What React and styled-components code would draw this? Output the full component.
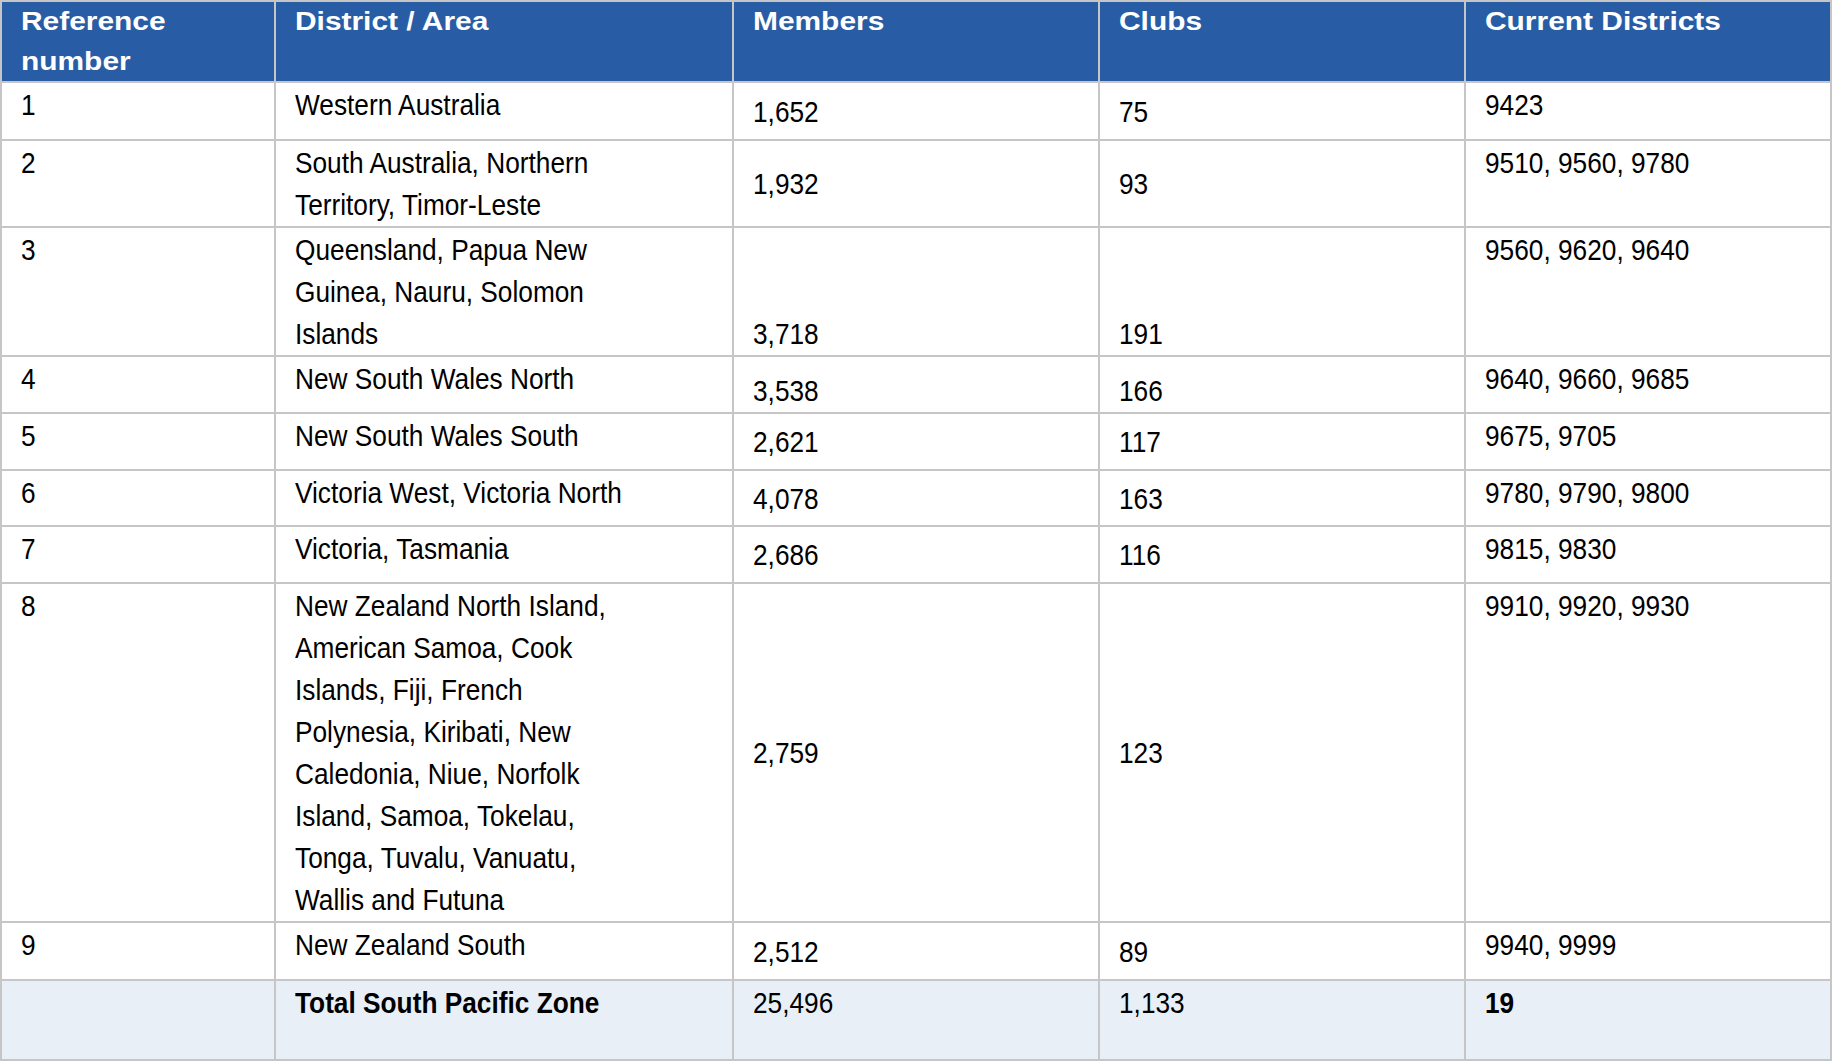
import React from 'react'
import styled, { createGlobalStyle } from 'styled-components'

const GlobalStyle = createGlobalStyle`
  body {
    margin: 0;
    background: #ffffff;
  }
`

const Table = styled.table`
  border-collapse: collapse;
  table-layout: fixed;
  width: 1832px;
  font-family: "Liberation Sans", Arial, sans-serif;
  color: #000;
`

const HeadCell = styled.th`
  background: #285da5;
  color: #fff;
  font-weight: 700;
  font-size: 26px;
  line-height: 40px;
  text-align: left;
  vertical-align: top;
  padding: 0 18px 0 19px;
  border: 2px solid #c6c6c6;
  height: 76px;
`

const Cell = styled.td`
  font-size: 29.5px;
  line-height: 42px;
  font-weight: ${(p) => (p.$bold ? 700 : 400)};
  vertical-align: ${(p) => p.$valign || 'top'};
  padding: 1px 18px 0 19px;
  border: 2px solid #c6c6c6;
`

const Row = styled.tr`
  height: ${(p) => p.$h}px;
  background: ${(p) => (p.$total ? '#e8eff7' : '#ffffff')};
`

// condensed look: the screenshot's fonts are narrower / wider than Arial
const Text = styled.span`
  display: block;
  white-space: nowrap;
  margin-top: ${(p) => p.$lift || 0}px;
  transform: scaleX(${(p) => p.$sx});
  transform-origin: 0 0;
`

const rows = [
  { ref: '1', area: ['Western Australia'], members: '1,652', clubs: '75', districts: '9423', align: 'middle', h: 58 },
  { ref: '2', area: ['South Australia, Northern', 'Territory, Timor-Leste'], members: '1,932', clubs: '93', districts: '9510, 9560, 9780', align: 'middle', h: 87 },
  { ref: '3', area: ['Queensland, Papua New', 'Guinea, Nauru, Solomon', 'Islands'], members: '3,718', clubs: '191', districts: '9560, 9620, 9640', align: 'bottom', h: 128 },
  { ref: '4', area: ['New South Wales North'], members: '3,538', clubs: '166', districts: '9640, 9660, 9685', align: 'bottom', h: 57 },
  { ref: '5', area: ['New South Wales South'], members: '2,621', clubs: '117', districts: '9675, 9705', align: 'middle', h: 57 },
  { ref: '6', area: ['Victoria West, Victoria North'], members: '4,078', clubs: '163', districts: '9780, 9790, 9800', align: 'middle', h: 56 },
  { ref: '7', area: ['Victoria, Tasmania'], members: '2,686', clubs: '116', districts: '9815, 9830', align: 'middle', h: 57 },
  {
    ref: '8',
    area: [
      'New Zealand North Island,',
      'American Samoa, Cook',
      'Islands, Fiji, French',
      'Polynesia, Kiribati, New',
      'Caledonia, Niue, Norfolk',
      'Island, Samoa, Tokelau,',
      'Tonga, Tuvalu, Vanuatu,',
      'Wallis and Futuna',
    ],
    members: '2,759',
    clubs: '123',
    districts: '9910, 9920, 9930',
    align: 'middle',
    h: 337,
  },
  { ref: '9', area: ['New Zealand South'], members: '2,512', clubs: '89', districts: '9940, 9999', align: 'middle', h: 58 },
]

const BODY_SX = 0.89
const HEAD_SX = 1.15

function Lines({ lines }) {
  return (
    <Text $sx={BODY_SX}>
      {lines.map((l, i) => (
        <React.Fragment key={i}>
          {i > 0 && <br />}
          {l}
        </React.Fragment>
      ))}
    </Text>
  )
}

function Head({ children }) {
  return (
    <HeadCell>
      <Text $sx={HEAD_SX} $lift={-1}>
        {children}
      </Text>
    </HeadCell>
  )
}

export default function App() {
  return (
    <>
      <GlobalStyle />
      <Table>
        <colgroup>
          <col style={{ width: 274 }} />
          <col style={{ width: 458 }} />
          <col style={{ width: 366 }} />
          <col style={{ width: 366 }} />
          <col style={{ width: 366 }} />
        </colgroup>
        <thead>
          <tr>
            <Head>
              Reference
              <br />
              number
            </Head>
            <Head>District / Area</Head>
            <Head>Members</Head>
            <Head>Clubs</Head>
            <Head>Current Districts</Head>
          </tr>
        </thead>
        <tbody>
          {rows.map((r) => (
            <Row key={r.ref} $h={r.h}>
              <Cell>
                <Text $sx={BODY_SX}>{r.ref}</Text>
              </Cell>
              <Cell>
                <Lines lines={r.area} />
              </Cell>
              <Cell $valign={r.align}>
                <Text $sx={BODY_SX}>{r.members}</Text>
              </Cell>
              <Cell $valign={r.align}>
                <Text $sx={BODY_SX}>{r.clubs}</Text>
              </Cell>
              <Cell>
                <Text $sx={BODY_SX}>{r.districts}</Text>
              </Cell>
            </Row>
          ))}
          <Row $h={80} $total>
            <Cell />
            <Cell $bold>
              <Text $sx={BODY_SX}>Total South Pacific Zone</Text>
            </Cell>
            <Cell>
              <Text $sx={BODY_SX}>25,496</Text>
            </Cell>
            <Cell>
              <Text $sx={BODY_SX}>1,133</Text>
            </Cell>
            <Cell $bold>
              <Text $sx={BODY_SX}>19</Text>
            </Cell>
          </Row>
        </tbody>
      </Table>
    </>
  )
}
